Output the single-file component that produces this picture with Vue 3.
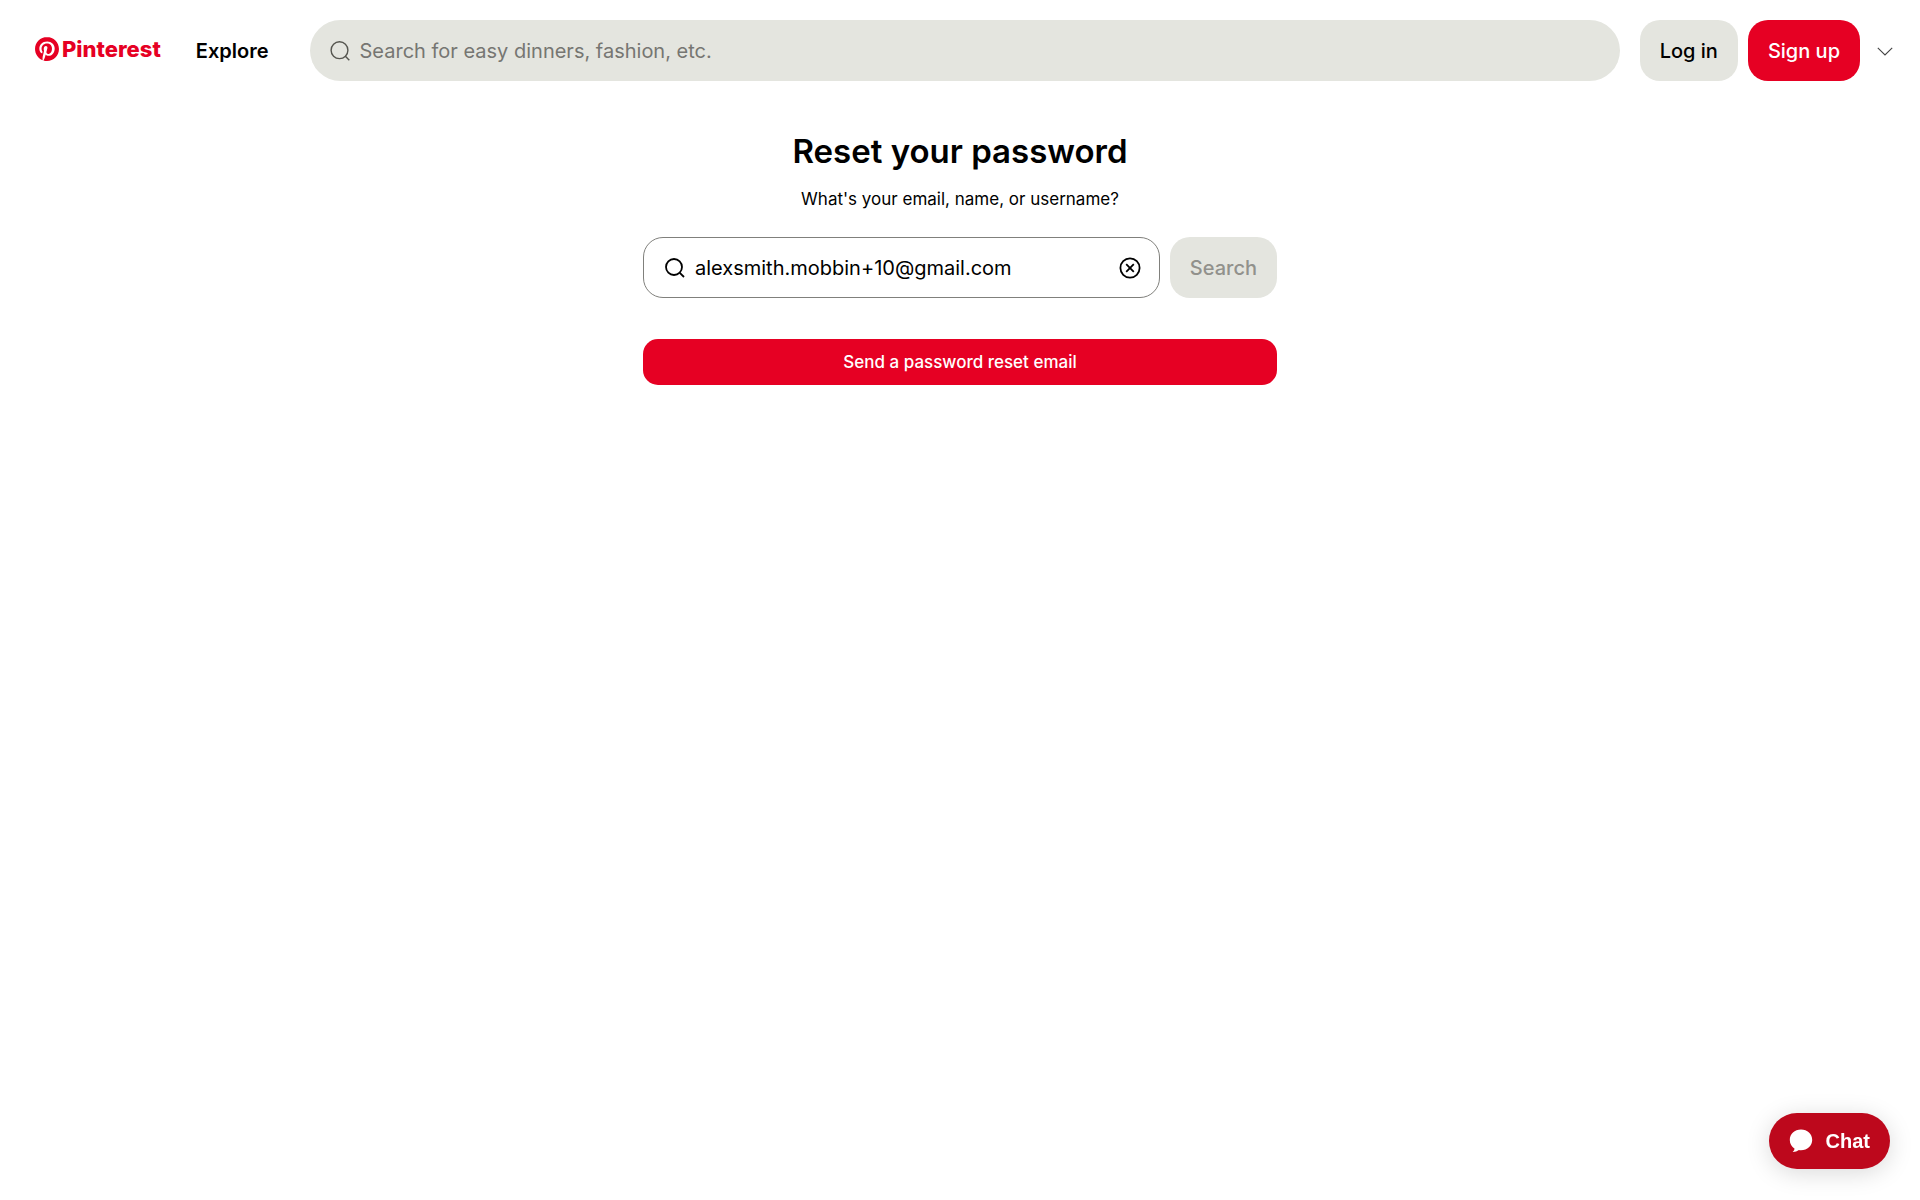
<template>
  <div class="page">
    <header class="header">
      <a class="logo" href="#" aria-label="Pinterest">
        <svg class="logo-mark" viewBox="0 0 24 24" aria-hidden="true">
          <path
            fill="currentColor"
            d="M12.017 0C5.396 0 .029 5.367.029 11.987c0 5.079 3.158 9.417 7.618 11.162-.105-.949-.199-2.403.041-3.439.219-.937 1.406-5.957 1.406-5.957s-.359-.72-.359-1.781c0-1.663.967-2.911 2.168-2.911 1.024 0 1.518.769 1.518 1.688 0 1.029-.653 2.567-.992 3.992-.285 1.193.6 2.165 1.775 2.165 2.128 0 3.768-2.245 3.768-5.487 0-2.861-2.063-4.869-5.008-4.869-3.41 0-5.409 2.562-5.409 5.199 0 1.033.394 2.143.889 2.741.099.12.112.225.085.345-.09.375-.293 1.199-.334 1.363-.053.225-.172.271-.401.165-1.495-.69-2.433-2.878-2.433-4.646 0-3.776 2.748-7.252 7.92-7.252 4.158 0 7.392 2.967 7.392 6.923 0 4.135-2.607 7.462-6.233 7.462-1.214 0-2.354-.629-2.758-1.379l-.749 2.848c-.269 1.045-1.004 2.352-1.498 3.146 1.123.345 2.306.535 3.55.535 6.607 0 11.985-5.365 11.985-11.987C23.97 5.39 18.592.026 11.985.026L12.017 0z"
          />
        </svg>
        <span class="logo-text">Pinterest</span>
      </a>
      <a class="explore" href="#">Explore</a>

      <div class="search-bar">
        <svg class="icon" viewBox="0 0 20 20" aria-hidden="true">
          <circle cx="9.5" cy="9.2" r="8.4" />
          <path d="M15.400 15.200L19.300 19.200" />
        </svg>
        <input
          v-model="query"
          type="text"
          aria-label="Search"
          placeholder="Search for easy dinners, fashion, etc."
        />
      </div>

      <div class="actions">
        <button type="button" class="btn btn-gray">Log in</button>
        <button type="button" class="btn btn-red">Sign up</button>
      </div>
      <button type="button" class="more" aria-label="More options">
        <svg viewBox="0 0 16 16" aria-hidden="true">
          <path d="M.8 4.800L8 12L15.200 4.800" />
        </svg>
      </button>
    </header>

    <main class="reset">
      <h1>Reset your password</h1>
      <label for="account">What's your email, name, or username?</label>

      <form class="reset-form" @submit.prevent>
        <div class="field">
          <svg class="icon" viewBox="0 0 20 20" aria-hidden="true">
            <circle cx="9" cy="9" r="8" />
            <path d="M14.800 14.800L19 19" />
          </svg>
          <input id="account" v-model="account" type="text" />
          <button type="button" class="clear" aria-label="Clear" @click="account = ''">
            <svg viewBox="0 0 22 22" aria-hidden="true">
              <circle cx="11" cy="11" r="9.6" />
              <path d="M7.200 7.200L14.800 14.800M14.800 7.200L7.200 14.800" />
            </svg>
          </button>
        </div>
        <button type="submit" class="btn btn-gray" disabled>Search</button>
      </form>

      <button type="button" class="send">Send a password reset email</button>
    </main>

    <button type="button" class="chat">
      <svg viewBox="0 0 24 24" aria-hidden="true">
        <path
          d="M12 .6C5.600 .6 .8 5.200 .8 11c0 3.700 1.900 6.800 4.800 8.700-.2 1.200-.9 2.300-2 3.300 2.600 0 4.700-.7 6.300-1.900.7.1 1.400.2 2.100.2 6.400 0 11.200-4.500 11.200-10.300S18.400 .6 12 .6z"
        />
      </svg>
      <span>Chat</span>
    </button>
  </div>
</template>

<script setup>
import { ref } from 'vue';

const query = ref('');
const account = ref('alexsmith.mobbin+10@gmail.com');
</script>

<style>
body {
  background: #fff;
}
</style>

<style scoped>
.page {
  min-height: 100vh;
  color: #000;
  font-family: Inter, "Liberation Sans", sans-serif;
  font-size: 20px;
}

.page * {
  box-sizing: border-box;
}

a {
  color: inherit;
  text-decoration: none;
}

button,
input {
  margin: 0;
  padding: 0;
  border: none;
  background: none;
  font: inherit;
  color: inherit;
}

button {
  cursor: pointer;
}

input {
  flex: 1;
  min-width: 0;
  outline: none;
}

svg {
  display: block;
  flex: none;
}

/* 顶部导航 */
.header {
  display: flex;
  align-items: center;
  height: 101px;
  padding: 0 27px 0 35px;
}

.logo {
  display: flex;
  align-items: center;
  gap: 3px;
  padding-bottom: 4px;
  color: #e60023;
}

.logo-mark {
  width: 24px;
  height: 24px;
}

.logo-text {
  font-size: 22px;
  font-weight: 800;
  line-height: 28px;
}

.explore {
  margin: 0 41px 0 35px;
  font-weight: 600;
}

.search-bar {
  display: flex;
  flex: 1;
  align-items: center;
  gap: 10px;
  height: 61px;
  padding: 0 20px;
  border-radius: 31px;
  background: #e4e5df;
}

.icon {
  width: 20px;
  height: 20px;
  fill: none;
  stroke: #000;
  stroke-width: 1.8;
}

.search-bar .icon {
  stroke: #55554f;
  stroke-width: 1.4;
}

.search-bar input::placeholder {
  color: #767672;
  opacity: 1;
}

.actions {
  display: flex;
  gap: 10px;
  margin-left: 20px;
}

.btn {
  height: 61px;
  padding: 0 20px;
  border-radius: 20px;
  font-weight: 500;
  white-space: nowrap;
}

.btn-gray {
  background: #e4e5df;
}

.btn-red {
  background: #e60023;
  color: #fff;
}

.btn:disabled {
  color: #91918c;
  cursor: default;
}

.more {
  margin-left: 17px;
}

.more svg {
  width: 16px;
  height: 16px;
  fill: none;
  stroke: #444;
  stroke-width: 1.1;
}

/* 重置密码 */
.reset {
  display: flex;
  flex-direction: column;
  max-width: 634px;
  margin: 0 auto;
  padding-top: 28px;
  text-align: center;
}

.reset h1 {
  margin: 0;
  font-size: 33px;
  font-weight: 600;
  line-height: 44px;
}

.reset label {
  margin-top: 13px;
  font-size: 17px;
  line-height: 26px;
}

.reset-form {
  display: flex;
  gap: 10px;
  margin-top: 25px;
}

.field {
  display: flex;
  flex: 1;
  align-items: center;
  gap: 10px;
  padding: 0 18px 0 21px;
  border: 1px solid #80807c;
  border-radius: 20px;
}

.clear svg {
  width: 22px;
  height: 22px;
  fill: none;
  stroke: #000;
  stroke-width: 1.8;
}

.send {
  height: 46px;
  margin-top: 41px;
  border-radius: 15px;
  background: #e60023;
  color: #fff;
  font-size: 17px;
  font-weight: 500;
}

/* 悬浮聊天按钮 */
.chat {
  position: fixed;
  right: 30px;
  bottom: 31px;
  display: flex;
  align-items: center;
  gap: 13px;
  height: 56px;
  padding: 0 20px;
  border-radius: 28px;
  background: #bd081c;
  box-shadow: 0 4px 24px rgba(0, 0, 0, 0.15);
  color: #fff;
  font-family: "Liberation Sans", Arial, sans-serif;
  font-weight: 700;
}

.chat svg {
  width: 24px;
  height: 24px;
  fill: #fff;
}
</style>
